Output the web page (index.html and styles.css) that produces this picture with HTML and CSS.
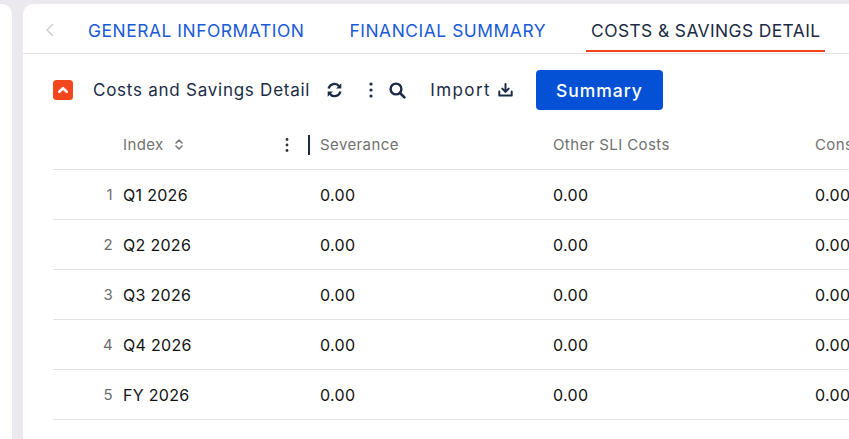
FILE: index.html
```html
<!DOCTYPE html>
<html lang="en">
<head>
<meta charset="utf-8">
<title>Costs and Savings Detail</title>
<link rel="stylesheet" href="styles.css">
</head>
<body>
<div class="app">
  <aside class="sidebar"></aside>
  <main class="main">
    <nav class="tabs">
      <span class="tab-back">
        <svg width="10" height="16" viewBox="0 0 10 16"><path d="M8 2 L2 8 L8 14" fill="none" stroke="#c9c9cc" stroke-width="1.3"/></svg>
      </span>
      <a class="tab">GENERAL INFORMATION</a>
      <a class="tab">FINANCIAL SUMMARY</a>
      <a class="tab tab-active">COSTS &amp; SAVINGS DETAIL</a>
    </nav>

    <div class="toolbar">
      <span class="collapse-btn">
        <svg width="20" height="20" viewBox="0 0 20 20"><rect width="20" height="20" rx="3.5" fill="#f2471d"/><path d="M6.3 11.8 L10 8.2 L13.7 11.8" fill="none" stroke="#fff" stroke-width="2.6" stroke-linecap="round" stroke-linejoin="round"/></svg>
      </span>
      <span class="title">Costs and Savings Detail</span>
      <span class="icon icon-refresh">
        <svg width="17" height="16" viewBox="0 0 17 16"><path d="M2.6 6.6 A6 6 0 0 1 13.2 4.3" fill="none" stroke="#1b2b45" stroke-width="2.3"/><path d="M15.3 1.2 L15.3 6.4 L10.1 6.4 Z" fill="#1b2b45"/><path d="M14.4 9.4 A6 6 0 0 1 3.8 11.7" fill="none" stroke="#1b2b45" stroke-width="2.3"/><path d="M1.7 14.8 L1.7 9.6 L6.9 9.6 Z" fill="#1b2b45"/></svg>
      </span>
      <span class="icon icon-kebab">
        <svg width="4" height="16" viewBox="0 0 4 16"><circle cx="2" cy="2" r="1.6" fill="#1b2b45"/><circle cx="2" cy="8" r="1.6" fill="#1b2b45"/><circle cx="2" cy="14" r="1.6" fill="#1b2b45"/></svg>
      </span>
      <span class="icon icon-search">
        <svg width="17" height="17" viewBox="0 0 17 17"><circle cx="7" cy="7" r="5.4" fill="none" stroke="#1b2b45" stroke-width="2.4"/><path d="M11 11 L15.4 15.4" stroke="#1b2b45" stroke-width="2.6" stroke-linecap="round"/></svg>
      </span>
      <span class="import">Import
        <svg width="15" height="14" viewBox="0 0 15 14"><path d="M7.5 1 L7.5 8.5" stroke="#1b2b45" stroke-width="2" stroke-linecap="round"/><path d="M4.3 5.6 L7.5 8.8 L10.7 5.6" fill="none" stroke="#1b2b45" stroke-width="2" stroke-linecap="round" stroke-linejoin="round"/><path d="M1.3 8.5 L1.3 12.4 L13.7 12.4 L13.7 8.5" fill="none" stroke="#1b2b45" stroke-width="2" stroke-linecap="round" stroke-linejoin="round"/></svg>
      </span>
      <button class="btn-summary">Summary</button>
    </div>

    <div class="grid">
      <div class="row row-head">
        <div class="cell cell-num"></div>
        <div class="cell cell-index head-index">
          <span class="head-label">Index
            <svg class="sort" width="10" height="13" viewBox="0 0 10 13"><path d="M2 5 L5 2 L8 5" fill="none" stroke="#7a7a7a" stroke-width="1.6" stroke-linecap="round" stroke-linejoin="round"/><path d="M2 8 L5 11 L8 8" fill="none" stroke="#7a7a7a" stroke-width="1.6" stroke-linecap="round" stroke-linejoin="round"/></svg>
          </span>
          <span class="head-tools">
            <svg width="4" height="16" viewBox="0 0 4 16"><circle cx="2" cy="2.5" r="1.4" fill="#333"/><circle cx="2" cy="8" r="1.4" fill="#333"/><circle cx="2" cy="13.5" r="1.4" fill="#333"/></svg>
            <span class="resize-bar"></span>
          </span>
        </div>
        <div class="cell cell-sev">Severance</div>
        <div class="cell cell-other">Other SLI Costs</div>
        <div class="cell cell-cons">Consulting Costs</div>
      </div>

      <div class="row">
        <div class="cell cell-num">1</div>
        <div class="cell cell-index">Q1 2026</div>
        <div class="cell cell-sev">0.00</div>
        <div class="cell cell-other">0.00</div>
        <div class="cell cell-cons">0.00</div>
      </div>
      <div class="row">
        <div class="cell cell-num">2</div>
        <div class="cell cell-index">Q2 2026</div>
        <div class="cell cell-sev">0.00</div>
        <div class="cell cell-other">0.00</div>
        <div class="cell cell-cons">0.00</div>
      </div>
      <div class="row">
        <div class="cell cell-num">3</div>
        <div class="cell cell-index">Q3 2026</div>
        <div class="cell cell-sev">0.00</div>
        <div class="cell cell-other">0.00</div>
        <div class="cell cell-cons">0.00</div>
      </div>
      <div class="row">
        <div class="cell cell-num">4</div>
        <div class="cell cell-index">Q4 2026</div>
        <div class="cell cell-sev">0.00</div>
        <div class="cell cell-other">0.00</div>
        <div class="cell cell-cons">0.00</div>
      </div>
      <div class="row">
        <div class="cell cell-num">5</div>
        <div class="cell cell-index">FY 2026</div>
        <div class="cell cell-sev">0.00</div>
        <div class="cell cell-other">0.00</div>
        <div class="cell cell-cons">0.00</div>
      </div>
    </div>
  </main>
</div>
</body>
</html>
```

FILE: styles.css
```css
* { box-sizing: border-box; }

html, body {
  margin: 0;
  height: 100%;
  overflow: hidden;
}

body {
  background: #ece9ee;
  font-family: Inter, "Open Sans", "Liberation Sans", sans-serif;
  color: #1b2b45;
}

.app {
  display: flex;
  gap: 11px;
  height: 100vh;
  padding-top: 4px;
}

.sidebar {
  width: 12px;
  flex: none;
  background: #fff;
  border-top-right-radius: 10px;
}

.main {
  flex: 1;
  min-width: 0;
  background: #fff;
  border-top-left-radius: 10px;
  overflow: hidden;
}

/* Tabs */
.tabs {
  height: 50px;
  border-bottom: 1px solid #e2e2e4;
  display: flex;
  align-items: stretch;
  padding-left: 22px;
  white-space: nowrap;
}

.tab-back {
  flex: none;
  display: flex;
  align-items: center;
  width: 38px;
  padding-top: 3px;
}

.tab {
  flex: none;
  display: flex;
  align-items: center;
  padding: 6px 5px 0;
  margin-right: 35px;
  font-size: 17.4px;
  letter-spacing: 0.55px;
  color: #1a5ad7;
  border-bottom: 2px solid transparent;
  margin-bottom: 1px;
}

.tab-active {
  color: #1b2b45;
  letter-spacing: 0.4px;
  border-bottom-color: #f2421c;
}

/* Toolbar */
.toolbar {
  display: flex;
  align-items: center;
  height: 40px;
  margin-top: 16px;
  padding-left: 30px;
  white-space: nowrap;
}

.collapse-btn {
  display: flex;
  width: 20px;
  height: 20px;
}

.title {
  margin-left: 20px;
  font-size: 17px;
  letter-spacing: 0.75px;
  color: #1b2b45;
}

.icon {
  display: flex;
  align-items: center;
}

.icon-refresh { margin-left: 16px; }
.icon-kebab { margin-left: 26px; }
.icon-search { margin-left: 16px; }

.import {
  display: flex;
  align-items: center;
  gap: 7px;
  margin-left: 24px;
  font-size: 17px;
  letter-spacing: 1.4px;
  color: #1b2b45;
}

.btn-summary {
  margin-left: 23px;
  width: 127px;
  height: 40px;
  border: none;
  border-radius: 4px;
  background: #0551d6;
  color: #fff;
  font-family: inherit;
  font-size: 17.5px;
  font-weight: 500;
  letter-spacing: 1px;
}

/* Grid */
.grid {
  margin-top: 10px;
  padding-left: 30px;
  width: max-content;
}

.row {
  display: flex;
  height: 50px;
  border-bottom: 1px solid #e2e2e2;
  font-size: 16px;
  letter-spacing: 0.3px;
  color: #111;
}

.row-head {
  height: 50px;
  font-size: 15px;
  color: #717171;
  letter-spacing: 0.4px;
}

.cell {
  display: flex;
  align-items: center;
  white-space: nowrap;
}

.cell-num {
  width: 65px;
  justify-content: flex-end;
  padding-right: 5px;
  color: #6d6d6d;
  font-size: 15px;
}

.cell-index {
  width: 192px;
  padding-left: 5px;
}

.head-index {
  justify-content: space-between;
}

.head-label {
  display: flex;
  align-items: center;
  gap: 10px;
}

.head-tools {
  display: flex;
  align-items: center;
  gap: 19px;
}

.resize-bar {
  width: 2px;
  height: 20px;
  background: #1b2b45;
}

.cell-sev {
  width: 243px;
  padding-left: 10px;
}

.cell-other {
  width: 262px;
}

.cell-cons {
  width: 200px;
}
```
